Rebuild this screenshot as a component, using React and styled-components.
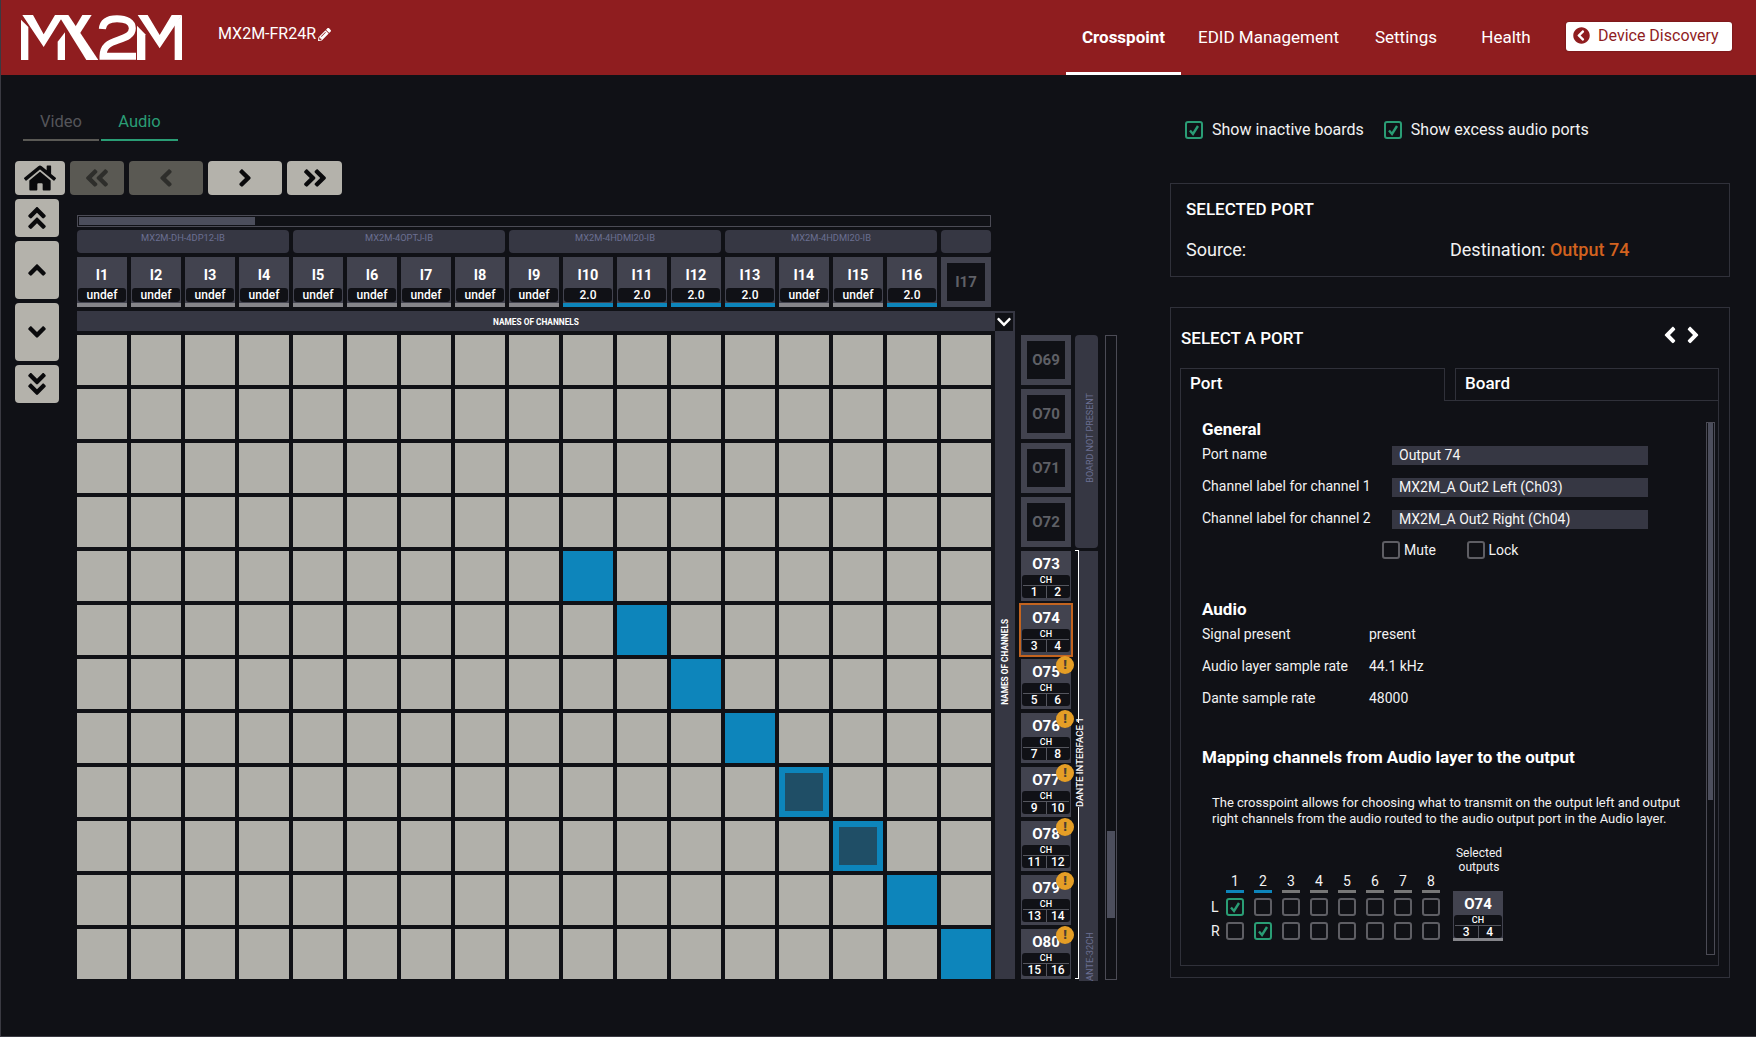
import React from 'react';
import styled, { createGlobalStyle } from 'styled-components';
import {
  FaHome, FaAngleDoubleLeft, FaAngleLeft, FaAngleRight, FaAngleDoubleRight,
  FaAngleDoubleUp, FaAngleUp, FaAngleDown, FaAngleDoubleDown, FaPencilAlt,
  FaChevronCircleLeft, FaChevronDown,
} from 'react-icons/fa';

const BG = '#101116';
const LINE = '#30313a';
const TILE = '#42434f';
const BAND = '#363743';
const MUTED = '#6b6f92';
const BLUE = '#0d85bb';
const GREEN = '#2a9d75';
const RED = '#8f1d1f';

const Global = createGlobalStyle`
  html, body { margin: 0; padding: 0; background: ${BG}; overflow: hidden; }
  body { font-family: Roboto, "Liberation Sans", sans-serif; color: #f2f2f2; }
  * { box-sizing: border-box; }
`;

const Page = styled.div`
  width: 1756px; height: 1037px; display: flex; flex-direction: column;
  background: ${BG}; border-left: 1px solid #3a3a42; border-bottom: 1px solid #3a3a42; overflow: hidden;
`;
const Header = styled.header`
  height: 75px; flex: none; background: ${RED}; display: flex; align-items: flex-start;
`;
const LogoBox = styled.svg`
  width: 161px; height: 45px; margin: 15px 0 0 20px; flex: none; fill: #fff;
`;
const DeviceName = styled.div`
  margin: 24px 0 0 36px; font-size: 16px; line-height: 20px; color: #fff; display: flex; align-items: center; gap: 2px;
`;
const Nav = styled.nav`
  margin-left: auto; display: flex; height: 75px;
`;
const NavItem = styled.a`
  width: ${p => p.$w}px; height: 75px; padding-top: 27px; text-align: center; font-size: 17px; line-height: 20px;
  color: #fff; font-weight: ${p => (p.$active ? 700 : 400)};
  border-bottom: 3px solid ${p => (p.$active ? '#fff' : 'transparent')};
`;
const DiscoveryButton = styled.button`
  width: 166px; height: 29px; margin: 22px 24px 0 10px; padding: 0 0 2px 7px; border: 0; border-radius: 3px; background: #fff;
  box-shadow: 0 0 2px rgba(0,0,0,.4);
  color: ${RED}; font: 400 16px/20px Roboto, sans-serif; display: flex; align-items: center; gap: 8px;
`;

const Main = styled.main`
  display: flex; align-items: flex-start; padding-left: 14px;
`;
const LeftColumn = styled.section`
  width: 1103px; flex: none; padding-top: 30px;
`;
const ModeTabs = styled.div`
  display: flex; gap: 2px; margin-left: 8px;
`;
const ModeTab = styled.div`
  width: ${p => p.$w}px; height: 36px; padding-top: 7px; text-align: center; font-size: 16.5px; line-height: 20px;
  color: ${p => (p.$active ? GREEN : '#55555a')}; border-bottom: 2px solid ${p => (p.$active ? GREEN : '#5a5955')};
`;
const Toolbar = styled.div`
  display: flex; gap: 5px; margin-top: 20px;
`;
const NavButton = styled.div`
  width: ${p => p.$w}px; height: ${p => p.$h}px; border-radius: 4px; display: flex; align-items: center; justify-content: center; flex: none;
  background: ${p => (p.$off ? '#5a5953' : '#b4b2ab')}; color: ${p => (p.$off ? '#2e2e2b' : '#0a0a0c')};
`;
const Workspace = styled.div`
  display: flex; margin-top: 4px;
`;
const SideButtons = styled.div`
  width: 44px; display: flex; flex-direction: column; gap: 4px; flex: none;
`;
const Matrix = styled.div`
  margin-left: 18px; width: 1041px; flex: none;
`;
const TopScroll = styled.div`
  width: 914px; height: 12px; margin-top: 16px; border: 1px solid #4b4b55; padding: 1px;
`;
const TopThumb = styled.div`
  width: 176px; height: 8px; background: #4c4e5c;
`;
const Boards = styled.div`
  display: flex; gap: 4px; margin-top: 3px;
`;
const Board = styled.div`
  width: ${p => p.$w}px; height: 23px; background: ${BAND}; border-radius: 4px; color: ${MUTED};
  font-size: 9.3px; line-height: 16px; text-align: center; white-space: nowrap;
`;
const Inputs = styled.div`
  display: flex; gap: 4px; margin-top: 4px;
`;
const InputTile = styled.div`
  width: 50px; height: 50px; background: ${TILE}; padding-top: 10px; border-bottom: 4px solid ${p => (p.$on ? BLUE : '#85858a')};
  display: flex; flex-direction: column; align-items: center;
`;
const InputLabel = styled.div`
  font-size: 14.5px; line-height: 18px; font-weight: 700; color: #fff;
`;
const Pill = styled.div`
  width: 48px; height: 14px; margin-top: 3px; background: ${BG}; border-radius: 3px; color: #fff;
  font-size: 12px; line-height: 15px; font-weight: 500; text-align: center;
`;
const GhostTile = styled.div`
  width: 50px; height: 50px; background: ${TILE}; padding: 6px; flex: none;
`;
const GhostInner = styled.div`
  width: 38px; height: 38px; background: ${BG}; color: #5f6066; font-size: 15px; font-weight: 700;
  display: flex; align-items: center; justify-content: center;
`;
const NamesBar = styled.div`
  width: 938px; height: 20px; margin-top: 4px; background: ${BAND}; display: flex; align-items: flex-end;
`;
const NamesText = styled.div`
  flex: 1; text-align: center; font-size: 8.3px; line-height: 22px; font-weight: 700; color: #fff; align-self: stretch;
`;
const ChevronBox = styled.div`
  width: 18px; height: 18px; margin-right: 2px; background: ${BG}; color: #fff; display: flex; align-items: center; justify-content: center;
`;
const Lower = styled.div`
  display: flex; align-items: flex-start;
`;
const Grid = styled.div`
  display: grid; grid-template-columns: repeat(17, 50px); grid-auto-rows: 50px; gap: 4px; padding-top: 4px; flex: none;
`;
const Cell = styled.div`
  background: ${p => (p.$state ? BLUE : '#b1b0aa')}; padding: 6px;
`;
const CellInner = styled.div`
  width: 100%; height: 100%; background: #1f4e66;
`;
const NamesSide = styled.div`
  width: 20px; height: 648px; margin-left: 4px; background: ${BAND}; display: flex; flex-direction: column;
  align-items: center; justify-content: flex-end; padding-bottom: 274px; flex: none;
`;
const VText = styled.div`
  writing-mode: vertical-rl; transform: rotate(180deg); white-space: nowrap;
  font-size: ${p => p.$size || 9}px; font-weight: ${p => p.$weight || 400}; color: ${p => p.$color || MUTED}; line-height: 1;
`;
const OutputColumn = styled.div`
  width: 50px; margin-left: 6px; padding-top: 4px; display: flex; flex-direction: column; gap: 4px; flex: none;
`;
const OutTile = styled.div`
  position: relative; width: 50px; height: 50px; background: ${TILE}; padding: 2px 1px 0; flex: none;
  display: flex; flex-direction: column;
  outline: ${p => (p.$selected ? '2px solid #c4641f' : 'none')};
  border-bottom: ${p => (p.$bar ? '3px solid #85858a' : 'none')};
`;
const OutLabel = styled.div`
  height: 22px; text-align: center; font-size: 15px; line-height: 22px; font-weight: 700; color: #fff;
`;
const ChannelBox = styled.div`
  height: 23px; background: ${BG}; border-radius: 3px; padding: 0 1px; color: #fff;
`;
const ChannelHead = styled.div`
  height: 11px; border-bottom: 1px solid #55565e; text-align: center; font-size: 9px; line-height: 10px; font-weight: 500;
`;
const ChannelNums = styled.div`
  display: flex; height: 12px;
`;
const ChannelNum = styled.div`
  flex: 1; text-align: center; font-size: 12px; line-height: 12px; font-weight: 500;
  & + & { border-left: 1px solid #55565e; }
`;
const WarnBadge = styled.div`
  position: absolute; top: -3px; right: -3px; width: 18px; height: 18px; border-radius: 50%; background: #e59e26;
  color: #4a4034; font-size: 13px; line-height: 18px; font-weight: 900; text-align: center;
`;
const BoardColumn = styled.div`
  width: 23px; margin-left: 4px; padding-top: 4px; display: flex; flex-direction: column; gap: 2px; flex: none;
`;
const NotPresent = styled.div`
  height: 213px; background: ${BAND}; border-radius: 4px; display: flex; align-items: center; justify-content: center;
  padding: 0 0 8px 7px;
`;
const DanteBlock = styled.div`
  height: 431px; display: flex;
`;
const Bracket = styled.div`
  width: 4px; height: 429px; display: flex; flex-direction: column; flex: none;
`;
const BracketTop = styled.div`
  height: 173px; border-top: 1px solid #fff; border-right: 1px solid #fff;
`;
const BracketBottom = styled.div`
  flex: 1; border-bottom: 1px solid #fff; border-right: 1px solid #fff;
`;
const BracketLabel = styled.div`
  height: 84px; width: 4px; display: flex; justify-content: center; transform: translateX(3px);
`;
const DanteBar = styled.div`
  width: 19px; height: 430px; margin-top: 1px; background: ${BAND}; overflow: hidden; display: flex; flex-direction: column;
  align-items: center; justify-content: flex-end; padding-left: 3px;
`;
const ClippedName = styled.div`
  margin-bottom: -6px;
`;
const SideScroll = styled.div`
  width: 12px; height: 645px; margin: 4px 0 0 7px; border: 1px solid #4b4b55; flex: none;
`;
const SideThumb = styled.div`
  width: 8px; height: 87px; margin: 495px 0 0 1px; background: #4c4e5c;
`;

const RightColumn = styled.aside`
  width: 560px; margin-left: 52px; padding-top: 46px; flex: none;
`;
const ShowRow = styled.div`
  display: flex; margin-left: 15px;
`;
const ShowItem = styled.label`
  display: flex; align-items: center; gap: 9px; font-size: 16px; line-height: 18px; margin-right: 20px;
`;
const Box = styled.span`
  width: 18px; height: 18px; border: 2px solid ${p => (p.$on ? GREEN : '#5e5e64')}; border-radius: 3px; flex: none; display: block;
`;
const BoxCheck = styled.svg`
  display: block; width: 14px; height: 14px; fill: none; stroke: ${GREEN}; stroke-width: 2.4;
`;
const Panel = styled.div`
  border: 1px solid ${LINE}; margin-top: ${p => p.$mt}px; height: ${p => p.$h}px;
`;
const SelectedPanel = styled(Panel)`
  padding: 15px 15px 0;
`;
const PanelTitle = styled.div`
  font-size: 17px; line-height: 21px; font-weight: 500; color: #fff;
`;
const ResultRow = styled.div`
  display: flex; margin-top: 20px; font-size: 18px; line-height: 20px;
`;
const SourceCell = styled.div`
  width: 264px;
`;
const Orange = styled.span`
  color: #d2621f; font-weight: 500;
`;
const SelectPanel = styled(Panel)`
  padding: 20px 10px 0 9px;
`;
const SelectHead = styled.div`
  display: flex; justify-content: space-between; align-items: center; height: 20px; padding: 0 13px 0 1px;
`;
const Arrows = styled.div`
  display: flex; gap: 0; color: #fff; margin-top: -7px;
  svg + svg { margin-left: -3px; }
`;
const TabRow = styled.div`
  display: flex; margin-top: 20px;
`;
const PortTab = styled.div`
  width: ${p => p.$w}px; height: 33px; padding: 4px 0 0 ${p => p.$pad}px; font-size: 17px; line-height: 20px; font-weight: 500; color: #fff;
  border: 1px solid ${LINE}; border-bottom: ${p => (p.$active ? '0' : `1px solid ${LINE}`)};
`;
const TabGap = styled.div`
  width: 10px; height: 33px; border-bottom: 1px solid ${LINE};
`;
const TabBody = styled.div`
  height: 565px; border: 1px solid ${LINE}; border-top: 0; display: flex;
`;
const TabMain = styled.div`
  flex: 1; padding: 18px 0 0 21px; font-size: 14px; line-height: 16px;
`;
const Section = styled.div`
  font-size: 17px; line-height: 20px; font-weight: 700; color: #fff; margin-top: ${p => p.$mt || 0}px;
`;
const FormRow = styled.div`
  display: flex; margin-top: ${p => p.$mt}px; height: 19px;
`;
const FormLabel = styled.div`
  width: ${p => p.$w}px; flex: none;
`;
const Field = styled.div`
  width: 256px; height: 19px; background: ${BAND}; padding-left: 7px; line-height: 19px; color: #f5f5f5;
`;
const ToggleRow = styled.div`
  display: flex; margin: 12px 0 0 180px;
`;
const Toggle = styled.div`
  width: 84.5px; display: flex; align-items: center; gap: 4px; line-height: 18px;
`;
const InfoRow = styled.div`
  display: flex; height: 16px; margin-top: ${p => p.$mt}px;
`;
const Note = styled.p`
  margin: 28px 0 0 10px; font-size: 13px; line-height: 16px; color: #f2f2f2; white-space: nowrap;
`;
const Mapping = styled.div`
  display: flex; align-items: flex-start; margin: 19px 0 0 9px;
`;
const MapGrid = styled.div`
  margin-top: 27px;
`;
const MapRow = styled.div`
  display: flex; gap: 10px; margin-top: ${p => p.$mt || 0}px; align-items: center;
`;
const MapSide = styled.div`
  width: 5px; font-size: 14px; line-height: 18px; white-space: nowrap;
`;
const MapHead = styled.div`
  width: 18px; height: 20px; text-align: center; font-size: 14px; line-height: 16px;
  border-bottom: 3px solid ${p => (p.$on ? BLUE : '#777')};
`;
const OutputsBlock = styled.div`
  margin-left: 13px; display: flex; flex-direction: column; align-items: center; gap: 17px;
`;
const OutputsTitle = styled.div`
  font-size: 12px; line-height: 14px; text-align: center; margin-left: 2px;
`;
const TabScroll = styled.div`
  width: 9px; height: 533px; margin: 21px 3px 0 0; border: 1px solid #4b4b55; padding: 0 1px; flex: none;
`;
const TabThumb = styled.div`
  height: 377px; background: #4c4e5c;
`;

const Logo = () => (
  <LogoBox viewBox="0 0 483 135">
    <path d="M0 14L22 36V135H0Z" />
    <path d="M4 0H36L68 58L102 0H128L68 96Z" />
    <path d="M112 0H142L232 135H196Z" />
    <path d="M110 135V80L132 52V135Z" />
    <path d="M152 54L184 0H212L166 72Z" />
    <path fill="none" stroke="#fff" strokeWidth="21" d="M244 42C246 18 264 11 288 11C316 11 334 22 334 40C334 60 316 67 292 75C264 84 246 94 246 124H345" />
    <path d="M348 135V32L373 58V135Z" />
    <path d="M350 0H380L416 60L452 0H483L416 100Z" />
    <path d="M461 28L483 0V135H461Z" />
  </LogoBox>
);

const Check = () => (
  <BoxCheck viewBox="0 0 14 14"><polyline points="3,7.5 6,11 11,3" /></BoxCheck>
);

const CheckBox = ({ on }) => <Box $on={on}>{on && <Check />}</Box>;

const OutputTile = ({ label, a, b, warn, selected, bar }) => (
  <OutTile $selected={selected} $bar={bar}>
    <OutLabel>{label}</OutLabel>
    <ChannelBox>
      <ChannelHead>CH</ChannelHead>
      <ChannelNums>
        <ChannelNum>{a}</ChannelNum>
        <ChannelNum>{b}</ChannelNum>
      </ChannelNums>
    </ChannelBox>
    {warn && <WarnBadge>!</WarnBadge>}
  </OutTile>
);

const inputs = [
  ['I1', 'undef'], ['I2', 'undef'], ['I3', 'undef'], ['I4', 'undef'],
  ['I5', 'undef'], ['I6', 'undef'], ['I7', 'undef'], ['I8', 'undef'],
  ['I9', 'undef'], ['I10', '2.0'], ['I11', '2.0'], ['I12', '2.0'],
  ['I13', '2.0'], ['I14', 'undef'], ['I15', 'undef'], ['I16', '2.0'],
];

const routes = { 4: 9, 5: 10, 6: 11, 7: 12, 8: 13, 9: 14, 10: 15, 11: 16 };
const hollow = new Set([8, 9]);
const rows = Array.from({ length: 12 }, (_, i) => i);
const cols = Array.from({ length: 17 }, (_, i) => i);
const mapCols = [1, 2, 3, 4, 5, 6, 7, 8];

const outputs = [
  { label: 'O73', a: 1, b: 2 },
  { label: 'O74', a: 3, b: 4, selected: true },
  { label: 'O75', a: 5, b: 6, warn: true },
  { label: 'O76', a: 7, b: 8, warn: true },
  { label: 'O77', a: 9, b: 10, warn: true },
  { label: 'O78', a: 11, b: 12, warn: true },
  { label: 'O79', a: 13, b: 14, warn: true },
  { label: 'O80', a: 15, b: 16, warn: true },
];

export default function App() {
  return (
    <Page>
      <Global />
      <Header>
        <Logo />
        <DeviceName>MX2M-FR24R <FaPencilAlt size={13} /></DeviceName>
        <Nav>
          <NavItem $w={115} $active>Crosspoint</NavItem>
          <NavItem $w={175}>EDID Management</NavItem>
          <NavItem $w={100}>Settings</NavItem>
          <NavItem $w={100}>Health</NavItem>
        </Nav>
        <DiscoveryButton><FaChevronCircleLeft size={17} />Device Discovery</DiscoveryButton>
      </Header>
      <Main>
        <LeftColumn>
          <ModeTabs>
            <ModeTab $w={76}>Video</ModeTab>
            <ModeTab $w={77} $active>Audio</ModeTab>
          </ModeTabs>
          <Toolbar>
            <NavButton $w={50} $h={34}><FaHome size={32} /></NavButton>
            <NavButton $w={54} $h={34} $off><FaAngleDoubleLeft size={28} /></NavButton>
            <NavButton $w={74} $h={34} $off><FaAngleLeft size={28} /></NavButton>
            <NavButton $w={74} $h={34}><FaAngleRight size={28} /></NavButton>
            <NavButton $w={55} $h={34}><FaAngleDoubleRight size={28} /></NavButton>
          </Toolbar>
          <Workspace>
            <SideButtons>
              <NavButton $w={44} $h={38}><FaAngleDoubleUp size={28} /></NavButton>
              <NavButton $w={44} $h={58}><FaAngleUp size={28} /></NavButton>
              <NavButton $w={44} $h={58}><FaAngleDown size={28} /></NavButton>
              <NavButton $w={44} $h={38}><FaAngleDoubleDown size={28} /></NavButton>
            </SideButtons>
            <Matrix>
              <TopScroll><TopThumb /></TopScroll>
              <Boards>
                <Board $w={212}>MX2M-DH-4DP12-IB</Board>
                <Board $w={212}>MX2M-4OPTJ-IB</Board>
                <Board $w={212}>MX2M-4HDMI20-IB</Board>
                <Board $w={212}>MX2M-4HDMI20-IB</Board>
                <Board $w={50} />
              </Boards>
              <Inputs>
                {inputs.map(([name, v]) => (
                  <InputTile key={name} $on={v === '2.0'}>
                    <InputLabel>{name}</InputLabel>
                    <Pill>{v}</Pill>
                  </InputTile>
                ))}
                <GhostTile><GhostInner>I17</GhostInner></GhostTile>
              </Inputs>
              <NamesBar>
                <NamesText>NAMES OF CHANNELS</NamesText>
                <ChevronBox><FaChevronDown size={16} /></ChevronBox>
              </NamesBar>
              <Lower>
                <Grid>
                  {rows.map(r => cols.map(c => {
                    const on = routes[r] === c;
                    return (
                      <Cell key={`${r}-${c}`} $state={on}>
                        {on && hollow.has(r) && <CellInner />}
                      </Cell>
                    );
                  }))}
                </Grid>
                <NamesSide><VText $size={8.3} $weight={700} $color="#fff">NAMES OF CHANNELS</VText></NamesSide>
                <OutputColumn>
                  {['O69', 'O70', 'O71', 'O72'].map(n => (
                    <GhostTile key={n}><GhostInner>{n}</GhostInner></GhostTile>
                  ))}
                  {outputs.map(o => <OutputTile key={o.label} {...o} />)}
                </OutputColumn>
                <BoardColumn>
                  <NotPresent><VText>BOARD NOT PRESENT</VText></NotPresent>
                  <DanteBlock>
                    <Bracket>
                      <BracketTop />
                      <BracketLabel><VText $size={9.6} $weight={500} $color="#fff">DANTE INTERFACE 1</VText></BracketLabel>
                      <BracketBottom />
                    </Bracket>
                    <DanteBar><ClippedName><VText $size={9.3}>DANTE-32CH</VText></ClippedName></DanteBar>
                  </DanteBlock>
                </BoardColumn>
                <SideScroll><SideThumb /></SideScroll>
              </Lower>
            </Matrix>
          </Workspace>
        </LeftColumn>
        <RightColumn>
          <ShowRow>
            <ShowItem><CheckBox on />Show inactive boards</ShowItem>
            <ShowItem><CheckBox on />Show excess audio ports</ShowItem>
          </ShowRow>
          <SelectedPanel $mt={44} $h={94}>
            <PanelTitle>SELECTED PORT</PanelTitle>
            <ResultRow>
              <SourceCell>Source:</SourceCell>
              <div>Destination: <Orange>Output 74</Orange></div>
            </ResultRow>
          </SelectedPanel>
          <SelectPanel $mt={30} $h={671}>
            <SelectHead>
              <PanelTitle>SELECT A PORT</PanelTitle>
              <Arrows><FaAngleLeft size={26} /><FaAngleRight size={26} /></Arrows>
            </SelectHead>
            <TabRow>
              <PortTab $w={265} $pad={9} $active>Port</PortTab>
              <TabGap />
              <PortTab $w={264} $pad={9}>Board</PortTab>
            </TabRow>
            <TabBody>
              <TabMain>
                <Section>General</Section>
                <FormRow $mt={7}><FormLabel $w={190}>Port name</FormLabel><Field>Output 74</Field></FormRow>
                <FormRow $mt={13}><FormLabel $w={190}>Channel label for channel 1</FormLabel><Field>MX2M_A Out2 Left (Ch03)</Field></FormRow>
                <FormRow $mt={13}><FormLabel $w={190}>Channel label for channel 2</FormLabel><Field>MX2M_A Out2 Right (Ch04)</Field></FormRow>
                <ToggleRow>
                  <Toggle><CheckBox />Mute</Toggle>
                  <Toggle><CheckBox />Lock</Toggle>
                </ToggleRow>
                <Section $mt={40}>Audio</Section>
                <InfoRow $mt={7}><FormLabel $w={167}>Signal present</FormLabel><div>present</div></InfoRow>
                <InfoRow $mt={16}><FormLabel $w={167}>Audio layer sample rate</FormLabel><div>44.1 kHz</div></InfoRow>
                <InfoRow $mt={16}><FormLabel $w={167}>Dante sample rate</FormLabel><div>48000</div></InfoRow>
                <Section $mt={41}>Mapping channels from Audio layer to the output</Section>
                <Note>
                  The crosspoint allows for choosing what to transmit on the output left and output<br />
                  right channels from the audio routed to the audio output port in the Audio layer.
                </Note>
                <Mapping>
                  <MapGrid>
                    <MapRow>
                      <MapSide />
                      {mapCols.map(n => <MapHead key={n} $on={n < 3}>{n}</MapHead>)}
                    </MapRow>
                    <MapRow $mt={5}>
                      <MapSide>L</MapSide>
                      {mapCols.map(n => <CheckBox key={n} on={n === 1} />)}
                    </MapRow>
                    <MapRow $mt={6}>
                      <MapSide>R</MapSide>
                      {mapCols.map(n => <CheckBox key={n} on={n === 2} />)}
                    </MapRow>
                  </MapGrid>
                  <OutputsBlock>
                    <OutputsTitle>Selected<br />outputs</OutputsTitle>
                    <OutputTile label="O74" a={3} b={4} bar />
                  </OutputsBlock>
                </Mapping>
              </TabMain>
              <TabScroll><TabThumb /></TabScroll>
            </TabBody>
          </SelectPanel>
        </RightColumn>
      </Main>
    </Page>
  );
}
